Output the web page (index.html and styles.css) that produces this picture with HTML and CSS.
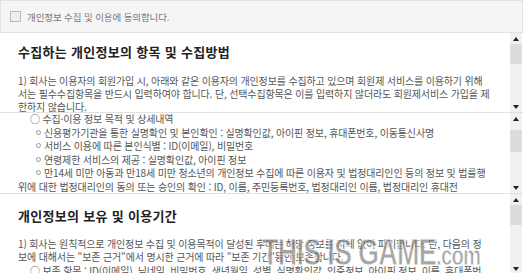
FILE: index.html
```html
<!DOCTYPE html>
<html lang="ko">
<head>
    <meta charset="UTF-8">
    <meta name="viewport" content="width=device-width, initial-scale=1.0">
    <title>개인정보 수집 및 이용 동의</title>
    <link rel="stylesheet" href="styles.css">
</head>
<body>
    <div class="page">
        <!-- 동의 체크 -->
        <label class="agree"><span class="check"></span>개인정보 수집 및 이용에 동의합니다.</label>

        <!-- 수집 항목 -->
        <div class="pane pane-one">
            <div class="pane-body">
                <h2>수집하는 개인정보의 항목 및 수집방법</h2>
                <p>1) 회사는 이용자의 회원가입 시, 아래와 같은 이용자의 개인정보를 수집하고 있으며 회원제 서비스를 이용하기 위해<br>서는 필수수집항목을 반드시 입력하여야 합니다. 단, 선택수집항목은 이를 입력하지 않더라도 회원제서비스 가입을 제<br>한하지 않습니다.</p>
            </div>
            <div class="bar">
                <span class="arrow up"></span>
                <span class="thumb thumb-one"></span>
                <span class="arrow down"></span>
            </div>
        </div>

        <!-- 상세내역 -->
        <div class="pane pane-two">
            <div class="pane-body">
                <ul class="items">
                    <li class="lead">○ 수집·이용 정보 목적 및 상세내역</li>
                    <li><span class="dot"></span>신용평가기관을 통한 실명확인 및 본인확인 : 실명확인값, 아이핀 정보, 휴대폰번호, 이동통신사명</li>
                    <li><span class="dot"></span>서비스 이용에 따른 본인식별 : ID(이메일), 비밀번호</li>
                    <li><span class="dot"></span>연령제한 서비스의 제공 : 실명확인값, 아이핀 정보</li>
                    <li><span class="dot"></span>만14세 미만 아동과 만18세 미만 청소년의 개인정보 수집에 따른 이용자 및 법정대리인인 등의 정보 및 법률행</li>
                    <li class="wrap">위에 대한 법정대리인의 동의 또는 승인의 확인 : ID, 이름, 주민등록번호, 법정대리인 이름, 법정대리인 휴대전</li>
                </ul>
            </div>
            <div class="bar">
                <span class="arrow up"></span>
                <span class="thumb thumb-two"></span>
                <span class="arrow down"></span>
            </div>
        </div>

        <!-- 보유 기간 -->
        <div class="pane pane-three">
            <div class="pane-body">
                <h2>개인정보의 보유 및 이용기간</h2>
                <p>1) 회사는 원칙적으로 개인정보 수집 및 이용목적이 달성된 후에는 해당 정보를 지체 없이 파기합니다. 단, 다음의 정<br>보에 대해서는 "보존 근거"에서 명시한 근거에 따라 "보존 기간"동안 보존합니다.</p>
                <ul class="items">
                    <li class="lead">○ 보존 항목 : ID(이메일), 닉네임, 비밀번호, 생년월일, 성별, 실명확인값, 인증정보, 아이핀 정보, 이름, 휴대폰번</li>
                </ul>
            </div>
            <div class="bar">
                <span class="arrow up"></span>
                <span class="thumb thumb-three"></span>
                <span class="arrow down"></span>
            </div>
        </div>

        <div class="mark">THIS IS GAME<small>.com</small></div>
    </div>
</body>
</html>
```

FILE: styles.css
```css
body { margin: 0; background: #fff; font-family: "Noto Sans CJK KR", "Noto Sans", sans-serif; color: #555; }
.page { position: relative; width: 523px; height: 273px; overflow: hidden; }

.agree { display: flex; align-items: center; gap: 6px; height: 31px; padding-left: 9px; background: #f5f5f5; border: 1px solid #e2e2e2; font-size: 9.5px; color: #777; letter-spacing: -0.1px; }
.check { width: 9px; height: 9px; border: 1px solid #bbb; background: #eee; }

.pane { display: flex; border-bottom: 1px solid #e0e0e0; overflow: hidden; }
.pane-one { height: 79px; }
.pane-two { height: 80px; }
.pane-three { height: 80px; border-bottom: none; }
.pane-body { flex: 1; padding-left: 18px; font-size: 10px; line-height: 13px; letter-spacing: -0.15px; white-space: nowrap; overflow: hidden; }

h2 { margin: 10px 0 0; font-size: 13px; line-height: 18px; color: #222; letter-spacing: 0.3px; }
.pane-one p { margin: 13px 0 0; }
.pane-three h2 { margin-top: 13px; }
.pane-three p { margin: 12px 0 0; }

.items { list-style: none; margin: 0; padding: 0; }
.items li { display: flex; align-items: center; gap: 3px; padding-left: 18px; }
.items .lead { padding-left: 12px; }
.items .wrap { padding-left: 0; }
.pane-two .items { margin-top: -1px; line-height: 13.5px; }
.pane-three .items { margin-top: 1px; }
.dot { width: 3px; height: 3px; border: 1px solid #999; border-radius: 50%; }

.bar { display: flex; flex-direction: column; width: 12px; margin-right: 1px; background: #f1f1f1; }
.arrow { display: flex; justify-content: center; align-items: center; height: 11px; }
.arrow::before { content: ""; border-left: 3px solid transparent; border-right: 3px solid transparent; }
.up::before { border-bottom: 4px solid #222; }
.down { margin-top: auto; }
.down::before { border-top: 4px solid #222; }
.thumb { background: #dcdcdc; }
.thumb-one { height: 20px; }
.thumb-two { height: 22px; margin-top: 6px; }
.thumb-three { height: 20px; }

.mark { position: absolute; left: 262px; top: 234px; white-space: nowrap; font-family: "Liberation Sans", "DejaVu Sans", sans-serif; font-weight: bold; font-size: 36px; line-height: 38px; letter-spacing: -1px; color: rgba(125, 125, 125, 0.7); -webkit-text-stroke: 1px rgba(255, 255, 255, 0.9); transform: scaleX(0.75); transform-origin: left top; }
.mark small { font-size: 27px; }
```
